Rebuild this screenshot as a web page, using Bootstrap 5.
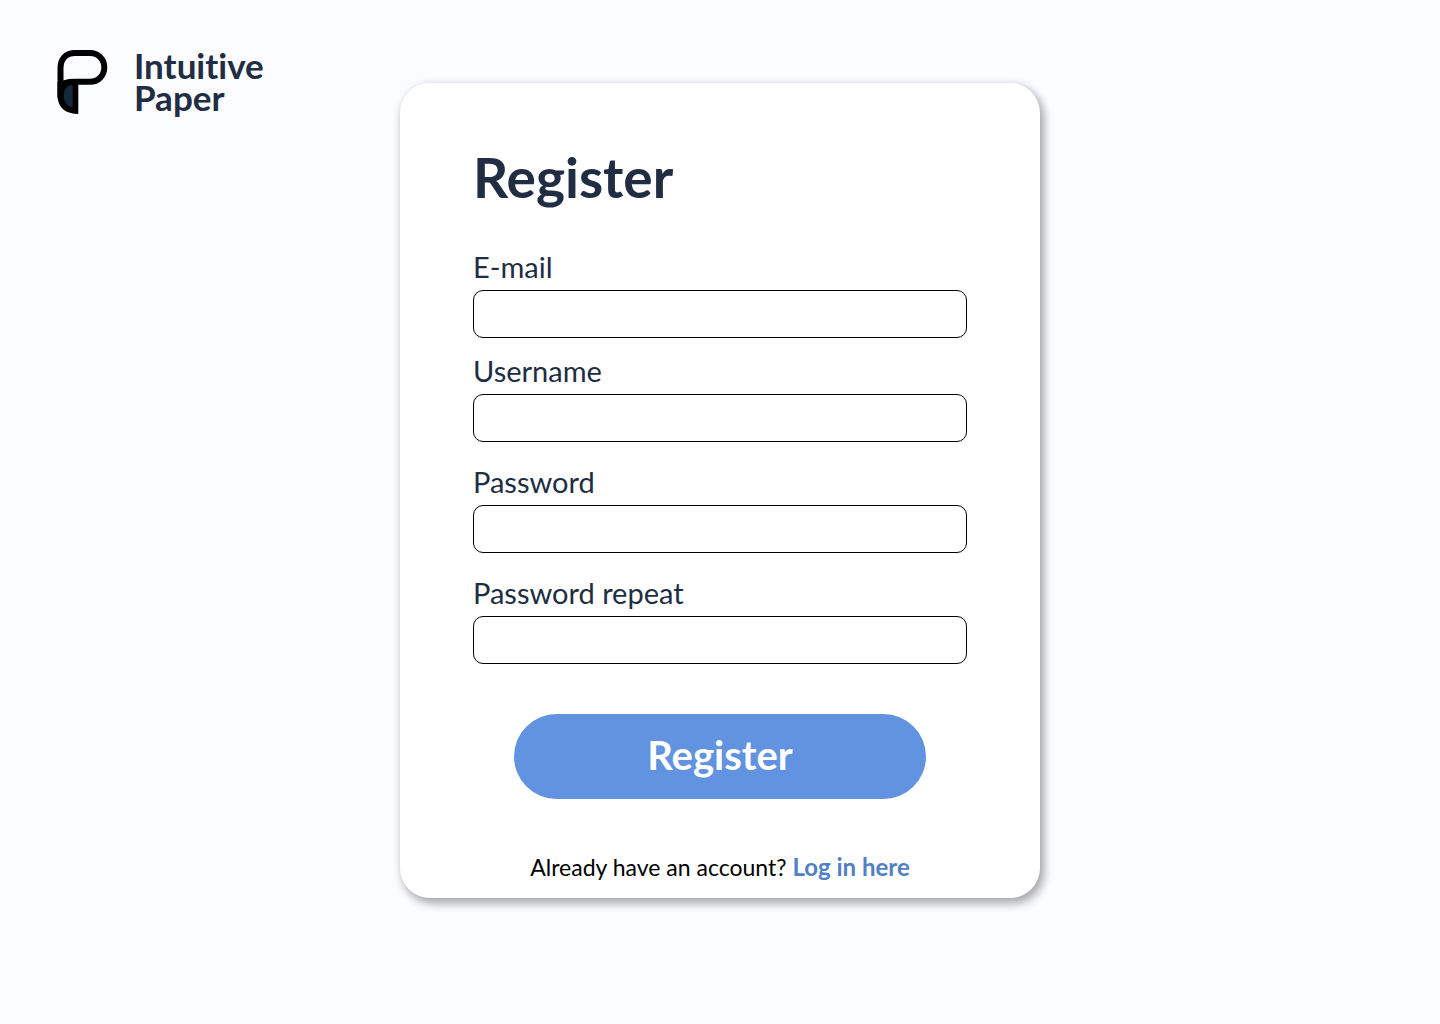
<!DOCTYPE html>
<html lang="en">
<head>
<meta charset="utf-8">
<meta name="viewport" content="width=device-width, initial-scale=1">
<title>Register – Intuitive Paper</title>
<link href="https://cdn.jsdelivr.net/npm/bootstrap@5.3.0/dist/css/bootstrap.min.css" rel="stylesheet">
<style>
body{background:#fbfcff;color:#212d42;font-family:Lato,"Open Sans",sans-serif;font-variant-ligatures:none}
.page-grid{display:grid;grid-template-columns:1fr minmax(0,640px) 1fr;align-items:start}
.brand-link{gap:26px;padding:49px 0 0 57px;color:#212d42}
.brand-mark{margin-top:1px}
.brand-name{font-size:35px;line-height:32px;font-weight:700}
.register-card{margin:83px 0;padding:64px 73px 12px;border-radius:30px;background:#fff;box-shadow:4px 6px 8px 1px rgba(0,0,0,.2),2px 2px 10px rgba(0,0,0,.2)}
.register-title{font-size:55px;line-height:60px;font-weight:700;margin-bottom:42px}
.field-label{font-size:29px;line-height:36px;margin-bottom:5px}
.field-input{height:48px;border:1px solid #000;border-radius:10px;font-size:24px}
.field-gap{margin-bottom:22px}
.field-gap-sm{margin-bottom:15px}
.submit-btn{width:412px;max-width:100%;height:85px;margin-top:50px;padding:0 12px 3px;background:#6293e0;color:#fff;font-size:40px;line-height:60px;font-weight:700}
.submit-btn:hover{background:#4f80cf;color:#fff}
.login-line{margin-top:50px;padding-bottom:1px;font-size:23px;line-height:36px;color:#000}
.login-line a{color:#5380c4;font-size:24px}
@media (max-width:1100px){.page-grid{grid-template-columns:minmax(0,640px);justify-content:center}.register-card{margin-top:32px}}
</style>
</head>
<body>
<div class="page-grid">
  <header>
    <a href="#" class="brand-link d-inline-flex text-decoration-none">
      <svg class="brand-mark" width="51" height="65" viewBox="57 50 51 65" aria-hidden="true">
        <path d="M60.5 98V68C60.5 59 66 53 75 53H90C98 53 104.3 59 104.3 67.4S98 81.800 90 81.800H75C70 81.800 63 82 60.5 86Z" fill="none" stroke="#000" stroke-width="6"/>
        <path d="M57.5 82H78.300V114C66 114 57.500 108 57.500 95Z" fill="#000"/>
        <path d="M72.600 84.700C66 85.500 63.700 90 63.700 95.500C63.700 102 67 106 72.600 107.500Z" fill="#14283f"/>
      </svg>
      <span class="brand-name">Intuitive<br>Paper</span>
    </a>
  </header>
  <main class="register-card">
    <h1 class="register-title">Register</h1>
    <form>
      <div class="field-gap-sm">
        <label for="email" class="field-label d-block">E-mail</label>
        <input type="email" id="email" class="form-control field-input">
      </div>
      <div class="field-gap">
        <label for="username" class="field-label d-block">Username</label>
        <input type="text" id="username" class="form-control field-input">
      </div>
      <div class="field-gap">
        <label for="password" class="field-label d-block">Password</label>
        <input type="password" id="password" class="form-control field-input">
      </div>
      <div>
        <label for="repeat" class="field-label d-block">Password repeat</label>
        <input type="password" id="repeat" class="form-control field-input">
      </div>
      <button type="submit" class="btn rounded-pill d-block mx-auto submit-btn">Register</button>
    </form>
    <p class="login-line text-center mb-0">Already have an account? <a href="#" class="fw-bold text-decoration-none">Log in here</a></p>
  </main>
</div>
<script src="https://cdn.jsdelivr.net/npm/bootstrap@5.3.0/dist/js/bootstrap.bundle.min.js"></script>
</body>
</html>
